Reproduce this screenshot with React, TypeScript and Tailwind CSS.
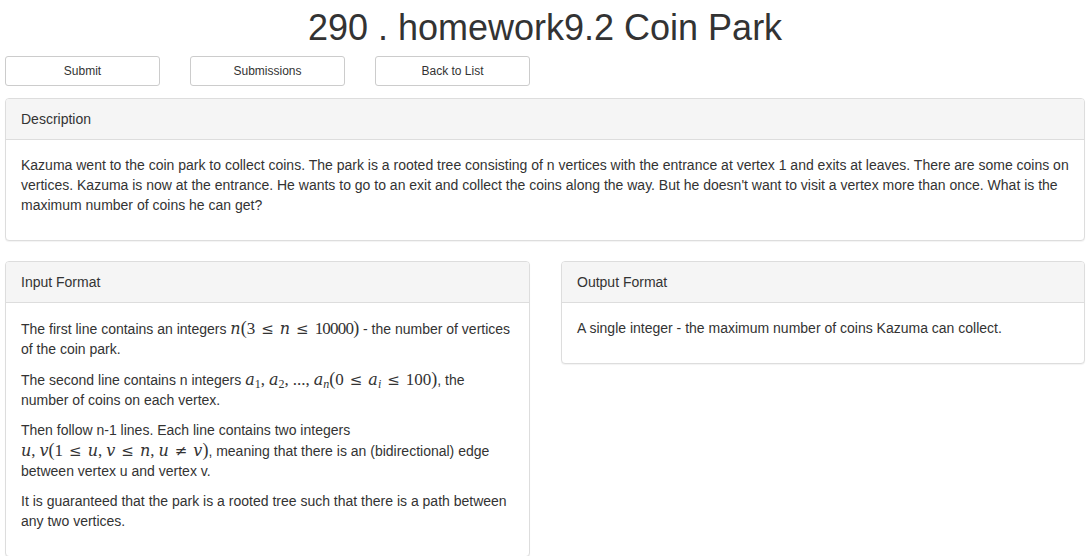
import type { ReactNode } from "react";

// KaTeX-like inline math: italic variables, upright digits and symbols
function I({ children }: { children: ReactNode }) {
    return <span className="font-['DejaVu_Serif',serif] text-[16px] italic">{children}</span>;
}

// relation symbol (≤, ≠) with thick spaces on both sides
function R({ children }: { children: ReactNode }) {
    return <span className="mx-[6px] font-['DejaVu_Serif',serif] text-[15px]">{children}</span>;
}

// comma followed by a thin space
function C() {
    return <span className="mr-[4px]">,</span>;
}

function P({ children }: { children: ReactNode }) {
    return <span className="text-[18px]">{children}</span>;
}

function M({ children }: { children: ReactNode }) {
    return (
        <span className="inline-block whitespace-nowrap font-['Liberation_Serif','DejaVu_Serif',serif] text-[17px] leading-[20px]">
            {children}
        </span>
    );
}

function Sub({ children, it = false }: { children: ReactNode; it?: boolean }) {
    return <sub className={`text-[12px] ${it ? "italic" : ""}`}>{children}</sub>;
}

function Panel({ title, children, className = "" }: { title: string; children: ReactNode; className?: string }) {
    return (
        <div className={`rounded-[4px] border border-[#ddd] bg-white shadow-[0_1px_1px_rgba(0,0,0,0.05)] ${className}`}>
            <div className="rounded-t-[3px] border-b border-[#ddd] bg-[#f5f5f5] px-[15px] py-[10px] text-[14px] leading-[20px] text-[#333]">
                {title}
            </div>
            <div className="p-[15px] text-[14px] leading-[20px] text-[#333]">{children}</div>
        </div>
    );
}

export default function App() {
    const buttons = ["Submit", "Submissions", "Back to List"];

    return (
        <div className="min-h-[556px] bg-white px-[5px] font-['Liberation_Sans',Arial,sans-serif] text-[#333]">
            <h1 className="pt-[8px] text-center text-[36px] leading-[40px] font-medium text-[#333]">
                290 . homework9.2 Coin Park
            </h1>

            <div className="mt-[8px] flex gap-[30px]">
                {buttons.map((b) => (
                    <button
                        key={b}
                        className="h-[30px] w-[155px] rounded-[3px] border border-[#ccc] bg-white text-[12px] leading-[18px] text-[#333]"
                    >
                        {b}
                    </button>
                ))}
            </div>

            <Panel title="Description" className="mt-[12px]">
                <p className="mb-[10px]">
                    Kazuma went to the coin park to collect coins. The park is a rooted tree consisting of n vertices with
                    the entrance at vertex 1 and exits at leaves. There are some coins on vertices. Kazuma is now at the
                    entrance. He wants to go to an exit and collect the coins along the way. But he doesn't want to visit a
                    vertex more than once. What is the maximum number of coins he can get?
                </p>
            </Panel>

            <div className="mt-[20px] flex items-start gap-[31px]">
                <Panel title="Input Format" className="w-[525px]">
                    <p className="mb-[10px]">
                        The first line contains an integers{" "}
                        <M>
                            <I>n</I>
                            <P>(</P>3<R>≤</R>
                            <I>n</I>
                            <R>≤</R>
                            <span className="tracking-[-0.8px]">10000</span>
                            <P>)</P>
                        </M>{" "}
                        - the number of vertices of the coin park.
                    </p>
                    <p className="mb-[10px]">
                        The second line contains n integers{" "}
                        <M>
                            <I>a</I>
                            <Sub>1</Sub>
                            <C />
                            <I>a</I>
                            <Sub>2</Sub>
                            <C />
                            ...
                            <C />
                            <I>a</I>
                            <Sub it>n</Sub>
                            <P>(</P>0<R>≤</R>
                            <I>a</I>
                            <Sub it>i</Sub>
                            <R>≤</R>100<P>)</P>
                        </M>
                        , the number of coins on each vertex.
                    </p>
                    <p className="mb-[10px]">
                        Then follow n-1 lines. Each line contains two integers{" "}
                        <M>
                            <I>u</I>
                            <C />
                            <I>v</I>
                            <P>(</P>1<R>≤</R>
                            <I>u</I>
                            <C />
                            <I>v</I>
                            <R>≤</R>
                            <I>n</I>
                            <C />
                            <I>u</I>
                            <R>≠</R>
                            <I>v</I>
                            <P>)</P>
                        </M>
                        , meaning that there is an (bidirectional) edge between vertex u and vertex v.
                    </p>
                    <p className="mb-[10px]">
                        It is guaranteed that the park is a rooted tree such that there is a path between any two vertices.
                    </p>
                </Panel>

                <Panel title="Output Format" className="w-[524px]">
                    <p className="mb-[10px]">A single integer - the maximum number of coins Kazuma can collect.</p>
                </Panel>
            </div>
        </div>
    );
}
